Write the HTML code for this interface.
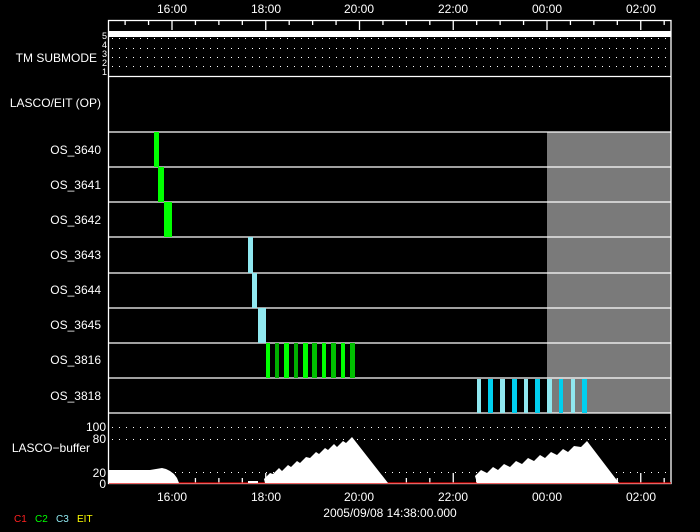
<!DOCTYPE html>
<html><head><meta charset="utf-8"><style>
html,body{margin:0;padding:0;background:#000;width:700px;height:532px;overflow:hidden}
svg{display:block}
text{font-family:"Liberation Sans",sans-serif;font-size:12px;fill:#fff}
</style></head><body>
<svg id="s" width="700" height="532" xmlns="http://www.w3.org/2000/svg">
<rect width="700" height="532" fill="#000"/>
<rect x="547" y="132" width="124" height="281" fill="#7a7a7a"/>
<g id="g"></g>
<rect x="108" y="31" width="563" height="6" fill="#fff"/>
<g stroke="#fff" stroke-width="1.3" fill="none">
<rect x="108.5" y="20.5" width="562.5" height="463"/>
<line x1="108" y1="76.5" x2="671" y2="76.5"/>
<line x1="108" y1="132" x2="671" y2="132"/>
<line x1="108" y1="167" x2="671" y2="167"/>
<line x1="108" y1="202" x2="671" y2="202"/>
<line x1="108" y1="237" x2="671" y2="237"/>
<line x1="108" y1="273" x2="671" y2="273"/>
<line x1="108" y1="308" x2="671" y2="308"/>
<line x1="108" y1="343" x2="671" y2="343"/>
<line x1="108" y1="378" x2="671" y2="378"/>
<line x1="108" y1="413" x2="671" y2="413"/>
</g>
<g stroke="#fff" stroke-width="1" stroke-dasharray="1 6">
<line x1="112" y1="38.5" x2="671" y2="38.5"/>
<line x1="112" y1="48.5" x2="671" y2="48.5"/>
<line x1="112" y1="57.5" x2="671" y2="57.5"/>
<line x1="112" y1="66.5" x2="671" y2="66.5"/>
<line x1="112" y1="427.5" x2="671" y2="427.5"/>
<line x1="112" y1="439.5" x2="671" y2="439.5"/>
<line x1="112" y1="472.5" x2="671" y2="472.5"/>
</g>
<!-- bars -->
<g fill="#00ff00">
<rect x="154" y="132" width="5" height="35"/>
<rect x="158" y="167" width="6" height="35"/>
<rect x="164" y="202" width="8" height="35"/>
</g>
<g fill="#90e8f0">
<rect x="248" y="237" width="5" height="36"/>
<rect x="252" y="273" width="5" height="35"/>
<rect x="258" y="308" width="8" height="35"/>
</g>
<g>
<rect x="266" y="343" width="4" height="35" fill="#00ff00"/>
<rect x="275" y="343" width="4" height="35" fill="#00b000"/>
<rect x="284" y="343" width="5" height="35" fill="#00ff00"/>
<rect x="294" y="343" width="4" height="35" fill="#00b000"/>
<rect x="303" y="343" width="5" height="35" fill="#00ff00"/>
<rect x="312" y="343" width="5" height="35" fill="#00c000"/>
<rect x="322" y="343" width="4" height="35" fill="#00ff00"/>
<rect x="331" y="343" width="5" height="35" fill="#00c000"/>
<rect x="341" y="343" width="4" height="35" fill="#00ff00"/>
<rect x="350" y="343" width="5" height="35" fill="#00c000"/>
</g>
<g>
<rect x="477" y="379" width="4" height="34" fill="#90e8f0"/>
<rect x="488" y="379" width="5" height="34" fill="#00d0f0"/>
<rect x="500" y="379" width="5" height="34" fill="#90e8f0"/>
<rect x="512" y="379" width="5" height="34" fill="#00d0f0"/>
<rect x="524" y="379" width="4" height="34" fill="#90e8f0"/>
<rect x="535" y="379" width="5" height="34" fill="#00d0f0"/>
<rect x="547" y="379" width="5" height="34" fill="#90e8f0"/>
<rect x="559" y="379" width="4" height="34" fill="#00d0f0"/>
<rect x="571" y="379" width="4" height="34" fill="#90e8f0"/>
<rect x="582" y="379" width="5" height="34" fill="#00d0f0"/>
</g>
<!-- buffer -->
<line x1="109" y1="483" x2="671" y2="483" stroke="#e00000" stroke-width="1.3"/>
<polygon id="b1" fill="#fff"/>
<polygon id="b2" fill="#fff"/>
<polygon id="b3" fill="#fff"/>
<polygon points="248,483 248,481 258,481 258,483" fill="#fff"/>
<!-- labels -->
<g text-anchor="middle">
<text x="172" y="13">16:00</text><text x="266" y="13">18:00</text><text x="359" y="13">20:00</text>
<text x="453" y="13">22:00</text><text x="547" y="13">00:00</text><text x="641" y="13">02:00</text>
<text x="172" y="501">16:00</text><text x="266" y="501">18:00</text><text x="359" y="501">20:00</text>
<text x="453" y="501">22:00</text><text x="547" y="501">00:00</text><text x="641" y="501">02:00</text>
<text x="390" y="517">2005/09/08 14:38:00.000</text>
</g>
<g text-anchor="end">
<text x="97" y="62">TM SUBMODE</text>
<text x="101" y="107">LASCO/EIT (OP)</text>
<text x="101" y="154">OS_3640</text>
<text x="101" y="189">OS_3641</text>
<text x="101" y="224">OS_3642</text>
<text x="101" y="259">OS_3643</text>
<text x="101" y="294">OS_3644</text>
<text x="101" y="329">OS_3645</text>
<text x="101" y="364">OS_3816</text>
<text x="101" y="400">OS_3818</text>
<text x="90" y="452">LASCO−buffer</text>
<text x="106" y="431" >100</text>
<text x="106" y="443">80</text>
<text x="106" y="477">20</text>
<text x="106" y="488">0</text>
</g>
<g font-size="9" text-anchor="end" style="font-size:9px">
<text x="107" y="39" style="font-size:9px">5</text>
<text x="107" y="48" style="font-size:9px">4</text>
<text x="107" y="57" style="font-size:9px">3</text>
<text x="107" y="66" style="font-size:9px">2</text>
<text x="107" y="75" style="font-size:9px">1</text>
</g>
<text x="14" y="522" style="font-size:10px;fill:#ff2020">C1</text>
<text x="35" y="522" style="font-size:10px;fill:#00ff00">C2</text>
<text x="56" y="522" style="font-size:10px;fill:#90e8f0">C3</text>
<text x="77" y="522" style="font-size:10px;fill:#ffff00">EIT</text>
</svg>
<script>
var NS="http://www.w3.org/2000/svg",g=document.getElementById("g");
function L(x1,y1,x2,y2){var l=document.createElementNS(NS,"line");l.setAttribute("x1",x1);l.setAttribute("y1",y1);l.setAttribute("x2",x2);l.setAttribute("y2",y2);l.setAttribute("stroke","#fff");l.setAttribute("stroke-width","1.3");g.appendChild(l);}
var pph=46.875;
for(var i=-4;i<30;i++){var x=172+i*pph/2;if(x<109||x>670)continue;var maj=(i%4==0);var len=maj?10:5;L(x,20,x,20+len);L(x,483,x,483-len);}
function saw(id,x0,peaks,endx){var p=[x0+",483"];var yb=483;
 peaks.forEach(function(pk,k){p.push(pk[0]-6+","+(pk[1]+6));p.push(pk[0]+","+pk[1]);});
 var last=peaks[peaks.length-1];p.push(endx+",483");
 document.getElementById(id).setAttribute("points",p.join(" "));}
document.getElementById("b1").setAttribute("points","109,483 109,470 150,470 156,469 162,468 166,469 170,471 174,474 177,478 179,483");
saw("b2",265,[[270,473],[279,468],[288,465],[297,461],[306,457],[316,452],[325,448],[334,444],[343,441],[352,437]],388);
saw("b3",477,[[481,470],[493,467],[504,464],[516,461],[528,458],[540,455],[551,452],[563,449],[574,446],[587,441]],619);
</script>
</body></html>
